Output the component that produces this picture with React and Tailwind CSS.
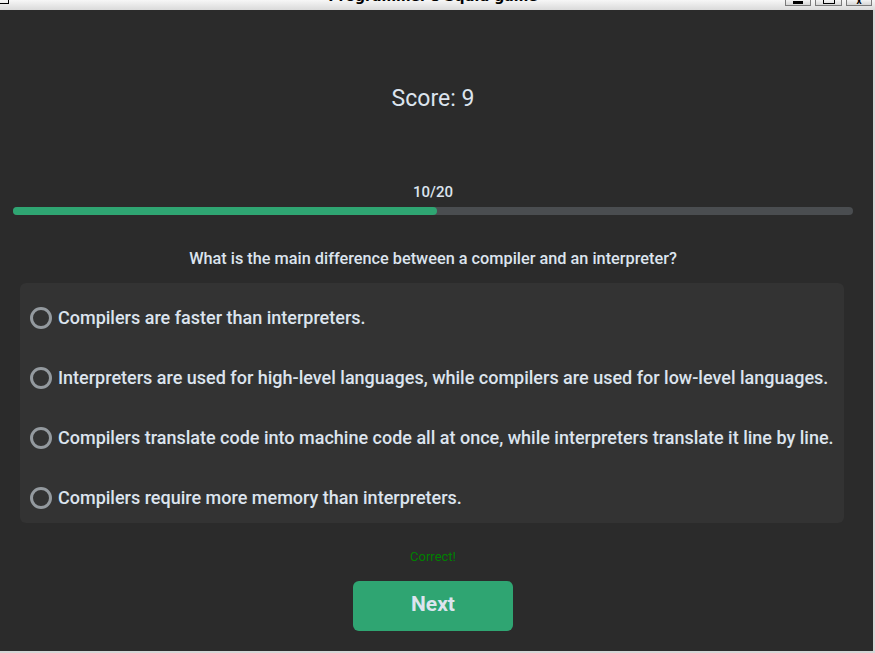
import React from 'react';

const OPTIONS = [
  'Compilers are faster than interpreters.',
  'Interpreters are used for high-level languages, while compilers are used for low-level languages.',
  'Compilers translate code into machine code all at once, while interpreters translate it line by line.',
  'Compilers require more memory than interpreters.',
];

// ── window chrome (mostly cropped off in the shot) ────────────────────────────

function TitleBar() {
  return (
    <div className="relative h-[10px] overflow-hidden bg-gradient-to-b from-[#f7f7f7] to-[#dadada]">
      <div className="absolute left-0 top-0 w-[9px] h-[4px] border-r border-b border-black" />
      <div className="flex justify-center w-[866px]">
        <span className="-mt-[11px] text-[14px] font-bold leading-[14px] text-black font-['DejaVu_Sans',sans-serif]">
          Programmer's Squid game
        </span>
      </div>
      <div className="absolute right-[3px] top-0 flex gap-[4px]">
        <div className="w-[26px] h-[7px] -mt-[1px] border border-[#7a7a7a] bg-gradient-to-b from-[#f4f4f4] to-[#d6d6d6] flex justify-center items-end">
          <div className="w-[10px] h-[3px] bg-black mb-[1px]" />
        </div>
        <div className="w-[27px] h-[7px] -mt-[1px] border border-[#7a7a7a] bg-gradient-to-b from-[#f4f4f4] to-[#d6d6d6] flex justify-center items-end">
          <div className="w-[12px] h-[4px] border-b border-x border-black mb-[1px]" />
        </div>
        <div className="w-[26px] h-[7px] -mt-[1px] border border-[#7a7a7a] bg-gradient-to-b from-[#f4f4f4] to-[#d6d6d6] flex justify-center items-end">
          <span className="text-[10px] leading-[8px] font-bold text-black">x</span>
        </div>
      </div>
    </div>
  );
}

function Radio() {
  return <div className="w-[22px] h-[22px] shrink-0 rounded-full border-[3px] border-[#949a9f]" />;
}

export default function App() {
  return (
    <div className="w-[875px] h-[653px] bg-[#d6d6d6] overflow-hidden font-['Roboto',sans-serif]">
      <TitleBar />
      <div className="w-[873px] h-[641px] bg-[#2b2b2b]">
        <div className="w-[866px] flex flex-col items-center text-[#dce4ee]">
          <div className="mt-[75px] text-[23px] leading-[27px]">Score: 9</div>

          <div className="mt-[71px] text-[15px] leading-[18px] font-medium">10/20</div>
          <div className="mt-[6px] w-[840px] h-[8px] rounded-full bg-[#4a4d50] self-start ml-[13px]">
            <div className="h-full w-[424px] rounded-full bg-[#2fa572]" />
          </div>

          <div className="mt-[34px] text-[16.3px] leading-[19px] font-medium">
            What is the main difference between a compiler and an interpreter?
          </div>

          <div className="mt-[15px] w-[824px] h-[240px] rounded-[6px] bg-[#333333] self-start ml-[20px] pl-[10px] pt-[24px] flex flex-col gap-[38px]">
            {OPTIONS.map((opt, i) => (
              <div key={i} className="flex items-center gap-[6px] h-[22px]">
                <Radio />
                <span className="text-[18px] leading-[22px] font-medium whitespace-nowrap">{opt}</span>
              </div>
            ))}
          </div>

          <div className="mt-[26px] text-[13px] leading-[16px] text-[#008000]">Correct!</div>

          <button className="mt-[16px] w-[160px] h-[50px] pb-[2px] rounded-[6px] bg-[#2fa572] text-[21px] font-bold text-[#dce4ee]">
            Next
          </button>
        </div>
      </div>
    </div>
  );
}
